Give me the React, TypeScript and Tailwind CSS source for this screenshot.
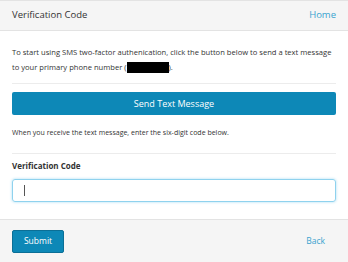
export default function App() {
  return (
    <div className="w-[348px] h-[262px] overflow-hidden bg-white text-[#333] font-['Open_Sans',sans-serif]">
      {/* header */}
      <div className="h-[31px] flex items-center justify-between px-3 bg-[#f5f5f5] border-t border-b border-[#e3e3e3]">
        <span className="text-[9.5px]">Verification Code</span>
        <a className="text-[9.5px] text-[#3aa3cf]">Home</a>
      </div>

      <div className="px-3">
        <p className="text-[7.6px] leading-[15px] pt-[14px] pb-[8px] border-b border-[#ececec]">
          To start using SMS two-factor authenication, click the button below to send a text message
          to your primary phone number (
          <span className="inline-block align-middle w-[42px] h-[11px] bg-black" />
          ).
        </p>

        <button className="mt-[8px] w-full h-[23px] rounded-[2px] bg-[#0d88b7] text-white text-[9px] flex items-center justify-center">
          Send Text Message
        </button>

        <p className="text-[7px] leading-[15px] pt-[10px] pb-[13px] border-b border-[#ececec]">
          When you receive the text message, enter the six-digit code below.
        </p>

        <label className="block text-[8px] font-bold pt-[5px] leading-[14px]">Verification Code</label>
        <div className="mt-[6px] h-[23px] rounded-[3px] border border-[#8fd2ee] shadow-[0_0_3px_#a8dcf2] flex items-center pl-[11px]">
          <span className="w-px h-[11px] bg-[#555]" />
        </div>
      </div>

      <div className="mt-[17px] h-[44px] bg-[#f5f5f5] border-t border-[#e3e3e3] flex items-center justify-between px-3">
        <button className="w-[52px] h-[23px] rounded-[2px] bg-[#0d88b7] border border-[#0b6f96] text-white text-[8.5px]">
          Submit
        </button>
        <a className="text-[8.5px] text-[#3aa3cf] mr-[11px]">Back</a>
      </div>
    </div>
  );
}
